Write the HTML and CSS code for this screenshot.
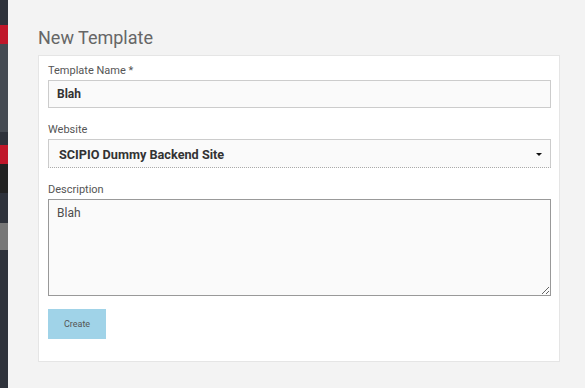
FILE: index.html
```html
<!DOCTYPE html>
<html lang="en">
<head>
  <meta charset="UTF-8">
  <title>New Template</title>
  <link rel="stylesheet" href="styles.css">
</head>
<body>
  <nav class="sidebar">
    <div class="seg seg-dark" style="height:25px"></div>
    <div class="seg seg-red" style="height:19px"></div>
    <div class="seg seg-gray" style="height:88px"></div>
    <div class="seg seg-dark" style="height:13px"></div>
    <div class="seg seg-red" style="height:19px"></div>
    <div class="seg seg-black" style="height:29px"></div>
    <div class="seg seg-dark" style="height:30px"></div>
    <div class="seg seg-light" style="height:27px"></div>
  </nav>
  <main class="content">
    <h1>New Template</h1>
    <form class="panel">
      <label class="field-label" for="tpl-name">Template Name *</label>
      <input class="text-input" id="tpl-name" type="text" value="Blah">

      <label class="field-label" for="tpl-site">Website</label>
      <div class="select-box" id="tpl-site">
        SCIPIO Dummy Backend Site
        <span class="select-arrow"></span>
      </div>

      <label class="field-label" for="tpl-desc">Description</label>
      <textarea class="text-area" id="tpl-desc">Blah</textarea>

      <button class="button" type="button">Create</button>
    </form>
  </main>
</body>
</html>
```

FILE: styles.css
```css
body {
  margin: 0;
  padding: 0;
  min-height: 100vh;
  display: flex;
  background-color: #f3f3f3;
  font-family: Roboto, "Liberation Sans", sans-serif;
  color: #4d4d4d;
}
.sidebar {
  width: 8px;
  flex-shrink: 0;
  background-color: #2e323b;
}
.seg-dark { background-color: #2e323b; }
.seg-red { background-color: #c0172a; }
.seg-gray { background-color: #454a52; }
.seg-black { background-color: #222222; }
.seg-light { background-color: #777777; }
.content {
  flex: 1;
  padding: 0 25px 0 30px;
}
h1 {
  font-size: 18px;
  font-weight: 400;
  color: #666666;
  margin: 27px 0 7px;
  line-height: 21px;
}
.panel {
  display: flex;
  flex-direction: column;
  align-items: stretch;
  background-color: #ffffff;
  border: 1px solid #e5e5e5;
  padding: 7px 8px 22px 9px;
}
.field-label {
  font-size: 11px;
  line-height: 15px;
  color: #555555;
  margin-bottom: 2px;
}
.text-input {
  box-sizing: border-box;
  height: 28px;
  margin: 0 0 14px;
  padding: 0 8px;
  border: 1px solid #cccccc;
  background-color: #fafafa;
  font-family: inherit;
  font-size: 12px;
  font-weight: 700;
  color: #333333;
  outline: none;
}
.select-box {
  position: relative;
  box-sizing: border-box;
  height: 29px;
  margin-bottom: 14px;
  padding: 0 10px;
  border: 1px solid #cccccc;
  border-bottom: 1px dotted #aaaaaa;
  background-color: #fafafa;
  font-size: 12.7px;
  font-weight: 700;
  color: #333333;
  line-height: 30px;
}
.select-arrow {
  position: absolute;
  right: 8px;
  top: 13px;
  width: 0;
  height: 0;
  border-left: 3px solid transparent;
  border-right: 3px solid transparent;
  border-top: 3px solid #111111;
}
.text-area {
  box-sizing: border-box;
  height: 97px;
  margin: 0 0 13px;
  padding: 6px 8px;
  border: 1px solid #999999;
  background-color: #fafafa;
  font-family: inherit;
  font-size: 12px;
  color: #4d4d4d;
  resize: both;
  outline: none;
}
.button {
  align-self: flex-start;
  width: 58px;
  height: 30px;
  border: none;
  background-color: #a0d3e8;
  color: #555555;
  font-family: inherit;
  font-size: 9px;
  padding: 0;
  cursor: pointer;
}
```
